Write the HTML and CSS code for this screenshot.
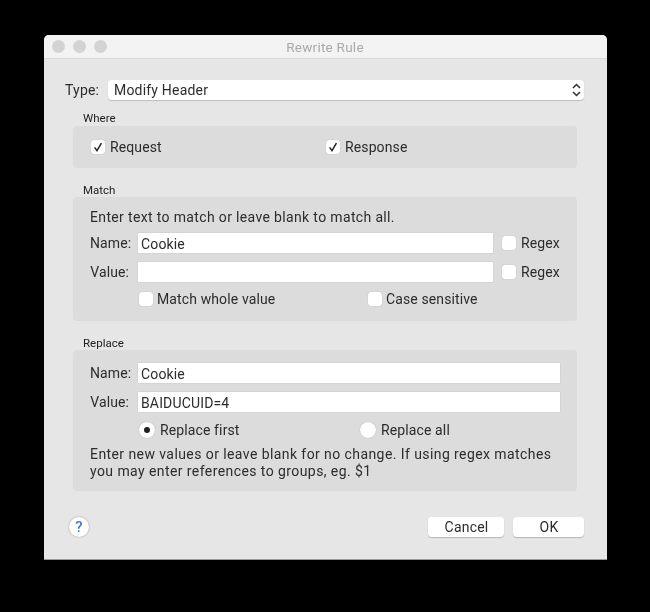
FILE: index.html
```html
<!DOCTYPE html>
<html lang="en">
<head>
<meta charset="utf-8">
<title>Rewrite Rule</title>
<link rel="stylesheet" href="styles.css">
</head>
<body>
<div class="window">
  <header class="titlebar">
    <div class="lights"><span class="light"></span><span class="light"></span><span class="light"></span></div>
    <div class="title">Rewrite Rule</div>
  </header>
  <main class="content">
    <div class="type-row">
      <span class="type-label">Type:</span>
      <div class="select">
        <span>Modify Header</span>
        <svg class="stepper" width="9" height="14" viewBox="0 0 9 14"><path d="M1 5 L4.5 1.5 L8 5 M1 9 L4.5 12.5 L8 9" fill="none" stroke="#333" stroke-width="1.5"/></svg>
      </div>
    </div>

    <section class="group where">
      <h2 class="group-title">Where</h2>
      <div class="panel where-panel">
        <label class="check col-request"><span class="box"><svg width="10" height="10" viewBox="0 0 10 10"><path d="M1.6 5.4 L4 8.6 L8.4 1.2" fill="none" stroke="#222" stroke-width="1.5"/></svg></span>Request</label>
        <label class="check col-response"><span class="box"><svg width="10" height="10" viewBox="0 0 10 10"><path d="M1.6 5.4 L4 8.6 L8.4 1.2" fill="none" stroke="#222" stroke-width="1.5"/></svg></span>Response</label>
      </div>
    </section>

    <section class="group match">
      <h2 class="group-title">Match</h2>
      <div class="panel match-panel">
        <p class="note">Enter text to match or leave blank to match all.</p>
        <div class="field-row">
          <span class="field-label">Name:</span>
          <div class="input">Cookie</div>
          <label class="check regex"><span class="box"></span>Regex</label>
        </div>
        <div class="field-row">
          <span class="field-label">Value:</span>
          <div class="input"></div>
          <label class="check regex"><span class="box"></span>Regex</label>
        </div>
        <div class="options">
          <label class="check opt-whole"><span class="box"></span>Match whole value</label>
          <label class="check"><span class="box"></span>Case sensitive</label>
        </div>
      </div>
    </section>

    <section class="group replace">
      <h2 class="group-title">Replace</h2>
      <div class="panel replace-panel">
        <div class="field-row">
          <span class="field-label">Name:</span>
          <div class="input">Cookie</div>
        </div>
        <div class="field-row">
          <span class="field-label">Value:</span>
          <div class="input">BAIDUCUID=4</div>
        </div>
        <div class="radios">
          <label class="radio radio-first"><span class="dot dot-on"></span>Replace first</label>
          <label class="radio"><span class="dot"></span>Replace all</label>
        </div>
        <p class="note note-two">Enter new values or leave blank for no change. If using regex matches<br>you may enter references to groups, eg. $1</p>
      </div>
    </section>

    <footer class="actions">
      <div class="help">?</div>
      <div class="buttons">
        <div class="button cancel">Cancel</div>
        <div class="button ok">OK</div>
      </div>
    </footer>
  </main>
</div>
</body>
</html>
```
FILE: styles.css
```css
* { box-sizing: border-box; }
html, body { margin: 0; height: 612px; background: #000; overflow: hidden; }
body { font-family: Roboto, "Liberation Sans", sans-serif; font-size: 14px; color: #2c2c2c; padding: 35px 0 0 44px; }
.window { width: 563px; height: 525px; background: #e6e6e6; border-radius: 5px 5px 0 0; display: flex; flex-direction: column; border-bottom: 1px solid #9a9a9a; filter: blur(0.35px); }
.titlebar { height: 24px; flex: none; position: relative; background: #f3f3f3; border-bottom: 1px solid #d8d8d8; border-radius: 5px 5px 0 0; display: flex; align-items: center; justify-content: center; }
.lights { position: absolute; left: 8px; top: 5px; display: flex; gap: 8px; }
.light { width: 13px; height: 13px; border-radius: 50%; background: #d3d3d3; }
.title { color: #a9a9a9; font-size: 13.5px; letter-spacing: 0.25px; margin-left: -1px; }
.content { flex: 1; padding: 21px 23px 0 21px; display: flex; flex-direction: column; }
.type-row { display: flex; align-items: center; height: 20px; }
.type-label { width: 43px; letter-spacing: 0.2px; }
.select { flex: 1; height: 20px; background: #fff; border-radius: 4px; box-shadow: 0 1px 1px #bdbdbd; padding: 0 3px 0 6px; display: flex; align-items: center; justify-content: space-between; letter-spacing: 0.2px; }
.stepper { display: block; }
.group { margin-left: 8px; width: 504px; }
.group-title { margin: 0; font-size: 11.5px; font-weight: 400; line-height: 14px; height: 14px; padding-left: 10px; color: #222; position: relative; top: 1px; }
.where { margin-top: 11px; }
.where .group-title { top: 0; }
.match { margin-top: 14px; }
.replace { margin-top: 14px; }
.panel { background: #dcdcdc; border-radius: 4px; margin-top: 1px; }
.where-panel { height: 42px; display: flex; align-items: center; padding: 0 0 0 18px; }
.col-request { width: 235px; }
.check { display: flex; align-items: center; gap: 5px; letter-spacing: 0.12px; }
.box { width: 14px; height: 14px; flex: none; background: #fff; border-radius: 3px; box-shadow: 0 0 1px #999; display: flex; align-items: center; justify-content: center; }
.match-panel { height: 124px; padding: 12px 0 0 17px; }
.note { margin: 0; line-height: 17px; letter-spacing: 0.35px; }
.field-row { display: flex; align-items: center; height: 20px; margin-bottom: 9px; }
.field-label { width: 39px; text-align: right; margin-right: 9px; flex: none; letter-spacing: 0.1px; }
.input { height: 20px; background: #fff; box-shadow: 0 0 1px #aaa; padding-left: 3px; padding-top: 1px; line-height: 20px; letter-spacing: 0.15px; flex: none; }
.match-panel .input { width: 355px; }
.match-panel .note { margin-bottom: 7px; }
.regex { margin-left: 9px; }
.options { display: flex; align-items: center; margin: 5px 0 0 49px; }
.options .check { gap: 4px; }
.opt-whole { width: 229px; }
.replace-panel { height: 141px; padding: 13px 0 0 17px; }
.replace-panel .input { width: 422px; }
.radios { display: flex; align-items: center; margin: 0 0 0 49px; height: 18px; }
.radio { display: flex; align-items: center; gap: 5px; letter-spacing: 0.12px; }
.radio-first { width: 221px; }
.dot { width: 16px; height: 16px; flex: none; background: #fff; border-radius: 50%; box-shadow: 0 0 1px #999; display: flex; align-items: center; justify-content: center; }
.dot-on::after { content: ""; width: 6px; height: 6px; border-radius: 50%; background: #222; }
.note-two { margin-top: 7px; letter-spacing: 0.42px; }
.actions { display: flex; align-items: center; justify-content: space-between; margin-top: 26px; padding-left: 4px; }
.help { width: 20px; height: 20px; border-radius: 50%; background: #fff; box-shadow: 0 0 2px #999; color: #3f74d6; font-weight: 500; text-align: center; line-height: 20px; font-size: 15px; }
.buttons { display: flex; gap: 9px; }
.button { height: 20px; background: #fff; border-radius: 4px; box-shadow: 0 1px 1px #b5b5b5; text-align: center; line-height: 20px; letter-spacing: 0.2px; padding-left: 1px; }
.cancel { width: 76px; }
.ok { width: 71px; }
```
